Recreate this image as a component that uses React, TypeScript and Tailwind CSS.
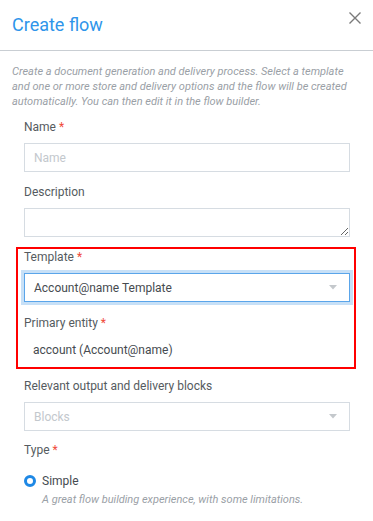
import React from "react";

function Caret() {
  return (
    <svg width="8" height="5" viewBox="0 0 8 5" className="shrink-0">
      <path d="M0 0 L8 0 L4 4.5 Z" fill="#c4c8cc" />
    </svg>
  );
}

function Label({ text, required }: { text: string; required?: boolean }) {
  return (
    <div className="text-[12px] leading-[16px] text-[#555b60]">
      {text}
      {required && <span className="text-[#f04a3a]"> *</span>}
    </div>
  );
}

export default function App() {
  return (
    <div
      className="w-[373px] h-[521px] bg-white overflow-hidden"
      style={{ fontFamily: "Roboto, 'Noto Sans', sans-serif" }}
    >
      <div className="h-[51px] border-b border-[#c9ced3] flex items-center justify-between pl-[12px] pr-[12px]">
        <div className="text-[18px] leading-[22px] text-[#2f95ea]">Create flow</div>
        <svg width="12" height="12" viewBox="0 0 12 12" className="mt-[-14px]">
          <path d="M0.5 0.5 L11.5 11.5 M11.5 0.5 L0.5 11.5" stroke="#7a7a7a" strokeWidth="1.4" />
        </svg>
      </div>
      <div className="pl-[12px] pr-[10px] pt-[13px] text-[11px] leading-[15px] italic text-[#9aa0a6]">
        Create a document generation and delivery process. Select a template and one or more store and delivery options and the flow will be created automatically. You can then edit it in the flow builder.
      </div>
      <div className="pl-[24px] pr-[23px]">
        <div className="mt-[10px]">
          <Label text="Name" required />
        </div>
        <div className="mt-[8px] h-[29px] border border-[#d6dce2] flex items-center pl-[9px] text-[12px] text-[#c3c8cd]">
          Name
        </div>
        <div className="mt-[12px]">
          <Label text="Description" />
        </div>
        <textarea
          className="block mt-[8px] w-full h-[29px] border border-[#d6dce2] outline-none"
          readOnly
        />
      </div>
      <div className="mt-[10px] ml-[16px] mr-[17px] border-2 border-[#ff0000] pl-[6px] pr-[4px] pb-[9px]">
        <Label text="Template" required />
        <div className="mt-[8px] h-[29px] border border-[#5aa5ea] ring-[3px] ring-[#c7e0f7] flex items-center justify-between pl-[9px] pr-[12px] text-[12px] text-[#464b50]">
          <span>Account@name Template</span>
          <Caret />
        </div>
        <div className="mt-[13px]">
          <Label text="Primary entity" required />
        </div>
        <div className="mt-[11px] pl-[9px] text-[12px] leading-[16px] text-[#464b50]">account (Account@name)</div>
      </div>
      <div className="pl-[24px] pr-[23px]">
        <div className="mt-[9px]">
          <Label text="Relevant output and delivery blocks" />
        </div>
        <div className="mt-[8px] h-[29px] border border-[#d6dce2] flex items-center justify-between pl-[9px] pr-[12px] text-[12px] text-[#c3c8cd]">
          <span>Blocks</span>
          <Caret />
        </div>
        <div className="mt-[11px]">
          <Label text="Type" required />
        </div>
        <div className="mt-[15px] flex items-center h-[16px]">
          <div className="w-[12px] h-[12px] rounded-full border-[3.5px] border-[#1e88e5] bg-white" />
          <span className="ml-[6px] text-[12px] leading-[16px] text-[#464b50]">Simple</span>
        </div>
        <div className="mt-[3px] pl-[18px] text-[11px] leading-[15px] italic text-[#9aa0a6]">
          A great flow building experience, with some limitations.
        </div>
      </div>
    </div>
  );
}
